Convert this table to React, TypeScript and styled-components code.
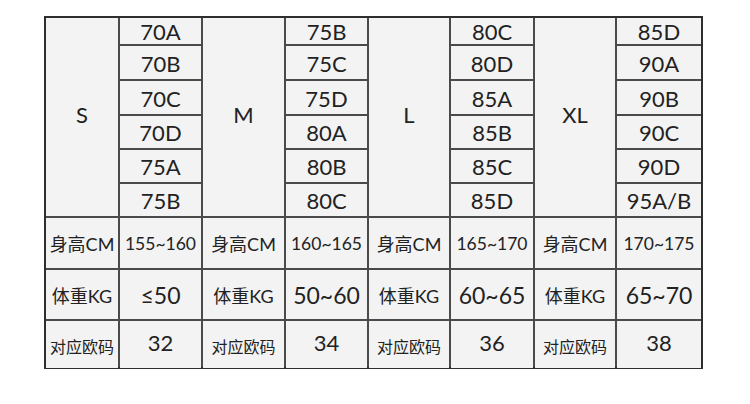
import styled, { createGlobalStyle } from "styled-components"

const GlobalStyle = createGlobalStyle`
    html, body {
        margin: 0;
        padding: 0;
        background: #ffffff;
    }
    body {
        font-family: Lato, "Noto Sans CJK SC", sans-serif;
        color: #222222;
    }
`

const groups = [
    { size: "S", cups: ["70A", "70B", "70C", "70D", "75A", "75B"], height: "155~160", weight: "≤50", eu: "32" },
    { size: "M", cups: ["75B", "75C", "75D", "80A", "80B", "80C"], height: "160~165", weight: "50~60", eu: "34" },
    { size: "L", cups: ["80C", "80D", "85A", "85B", "85C", "85D"], height: "165~170", weight: "60~65", eu: "36" },
    { size: "XL", cups: ["85D", "90A", "90B", "90C", "90D", "95A/B"], height: "170~175", weight: "65~70", eu: "38" },
]

export default function App() {
    return (
        <Page>
            <GlobalStyle />
            <Table>
                {groups.map((g, gi) => (
                    <SizeCell key={g.size} $col={gi * 2 + 1}>{g.size}</SizeCell>
                ))}
                {groups.map((g, gi) =>
                    g.cups.map((c, ri) => (
                        <Cell key={g.size + c} $col={gi * 2 + 2} $row={ri + 1} $size={22}>
                            {c}
                        </Cell>
                    ))
                )}
                {groups.map((g, gi) => [
                    <LabelCell key={g.size + "h"} $col={gi * 2 + 1} $row={7}>身高CM</LabelCell>,
                    <Cell key={g.size + "hv"} $col={gi * 2 + 2} $row={7} $size={17.5}>{g.height}</Cell>,
                    <LabelCell key={g.size + "w"} $col={gi * 2 + 1} $row={8}>体重KG</LabelCell>,
                    <Cell key={g.size + "wv"} $col={gi * 2 + 2} $row={8} $size={23}>{g.weight}</Cell>,
                    <LabelCell key={g.size + "e"} $col={gi * 2 + 1} $row={9} $small>对应欧码</LabelCell>,
                    <Cell key={g.size + "ev"} $col={gi * 2 + 2} $row={9} $size={22} $lift>{g.eu}</Cell>,
                ])}
            </Table>
        </Page>
    )
}

const Page = styled.div`
    width: 750px;
    height: 404px;
    padding: 16px 0 0 44px;
    box-sizing: border-box;
`

const Table = styled.div`
    display: grid;
    width: 659px;
    height: 353px;
    grid-template-columns: 72px 81px 81px 81px 80px 82px 80px 84px;
    grid-template-rows: 26px 33px 33px 32px 32px 32px 50px 49px 47px;
    gap: 2px;
    background: #4a4a4a;
    border: 2px solid #2e2e2e;
    box-sizing: border-box;
`

const BaseCell = styled.div<{ $col: number; $row?: number }>`
    grid-column: ${(p) => p.$col};
    grid-row: ${(p) => p.$row ?? "auto"};
    background: #f3f3f3;
    display: flex;
    align-items: center;
    justify-content: center;
    white-space: nowrap;
    overflow: hidden;
    line-height: 1;
`

const SizeCell = styled(BaseCell)`
    grid-row: 1 / span 6;
    font-size: 22px;
    padding-bottom: 4px;
`

const Cell = styled(BaseCell)<{ $size: number; $lift?: boolean }>`
    font-size: ${(p) => p.$size}px;
    padding-top: ${(p) => (p.$lift ? 0 : 2)}px;
    padding-bottom: ${(p) => (p.$lift ? 4 : 0)}px;
`

const LabelCell = styled(BaseCell)<{ $small?: boolean }>`
    font-size: ${(p) => (p.$small ? 16 : 18)}px;
    padding-top: ${(p) => (p.$small ? 4 : 2)}px;
`
